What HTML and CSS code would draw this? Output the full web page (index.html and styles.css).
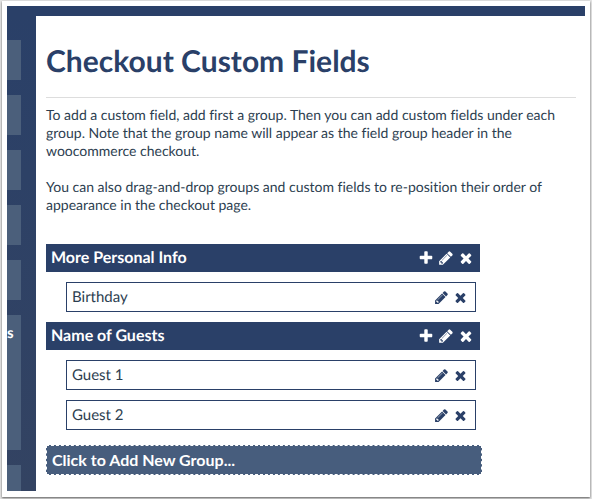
FILE: index.html
```html
<!DOCTYPE html>
<html lang="en">
<head>
    <meta charset="UTF-8">
    <meta name="viewport" content="width=device-width, initial-scale=1.0">
    <title>Checkout Custom Fields</title>
    <link rel="stylesheet" href="styles.css">
</head>
<body>
    <svg class="sprite" aria-hidden="true">
        <symbol id="icon-plus" viewBox="0 0 1792 1792"><path d="M1600 736v192q0 40-28 68t-68 28h-416v416q0 40-28 68t-68 28h-192q-40 0-68-28t-28-68v-416h-416q-40 0-68-28t-28-68v-192q0-40 28-68t68-28h416v-416q0-40 28-68t68-28h192q40 0 68 28t28 68v416h416q40 0 68 28t28 68z"/></symbol>
        <symbol id="icon-pencil" viewBox="0 0 1792 1792"><path d="M491 1536l91-91-235-235-91 91v107h128v128h107zm523-928q0-22-22-22-10 0-17 7l-542 542q-7 7-7 17 0 22 22 22 10 0 17-7l542-542q7-7 7-17zm-54-192l416 416-832 832h-416v-416zm683 96q0 53-37 90l-166 166-416-416 166-165q36-38 90-38 53 0 91 38l235 234q37 39 37 91z"/></symbol>
        <symbol id="icon-times" viewBox="0 0 1792 1792"><path d="M1490 1322q0 40-28 68l-136 136q-28 28-68 28t-68-28l-294-294-294 294q-28 28-68 28t-68-28l-136-136q-28-28-28-68t28-68l294-294-294-294q-28-28-28-68t28-68l136-136q28-28 68-28t68 28l294 294 294-294q28-28 68-28t68 28l136 136q28 28 28 68t-28 68l-294 294 294 294q28 28 28 68z"/></symbol>
    </svg>

    <div class="frame">
        <div class="app">
            <nav class="sidebar">
                <div class="tile"></div>
                <div class="tile"></div>
                <div class="tile"></div>
                <div class="tile"></div>
                <div class="tile"></div>
                <div class="tile tile-tall">s</div>
                <div class="tile tile-last"></div>
            </nav>

            <main class="content">
                <h1>Checkout Custom Fields</h1>

                <p>To add a custom field, add first a group. Then you can add custom fields under each group. Note that the group name will appear as the field group header in the woocommerce checkout.</p>
                <p>You can also drag-and-drop groups and custom fields to re-position their order of appearance in the checkout page.</p>

                <div class="groups">
                    <section class="group">
                        <div class="group-header">
                            <h2>More Personal Info</h2>
                            <button type="button" aria-label="Add field"><svg class="icon"><use href="#icon-plus"/></svg></button>
                            <button type="button" aria-label="Edit group"><svg class="icon"><use href="#icon-pencil"/></svg></button>
                            <button type="button" aria-label="Delete group"><svg class="icon"><use href="#icon-times"/></svg></button>
                        </div>
                        <ul class="fields">
                            <li class="field">
                                <span>Birthday</span>
                                <button type="button" aria-label="Edit field"><svg class="icon"><use href="#icon-pencil"/></svg></button>
                                <button type="button" aria-label="Delete field"><svg class="icon"><use href="#icon-times"/></svg></button>
                            </li>
                        </ul>
                    </section>

                    <section class="group">
                        <div class="group-header">
                            <h2>Name of Guests</h2>
                            <button type="button" aria-label="Add field"><svg class="icon"><use href="#icon-plus"/></svg></button>
                            <button type="button" aria-label="Edit group"><svg class="icon"><use href="#icon-pencil"/></svg></button>
                            <button type="button" aria-label="Delete group"><svg class="icon"><use href="#icon-times"/></svg></button>
                        </div>
                        <ul class="fields">
                            <li class="field">
                                <span>Guest 1</span>
                                <button type="button" aria-label="Edit field"><svg class="icon"><use href="#icon-pencil"/></svg></button>
                                <button type="button" aria-label="Delete field"><svg class="icon"><use href="#icon-times"/></svg></button>
                            </li>
                            <li class="field">
                                <span>Guest 2</span>
                                <button type="button" aria-label="Edit field"><svg class="icon"><use href="#icon-pencil"/></svg></button>
                                <button type="button" aria-label="Delete field"><svg class="icon"><use href="#icon-times"/></svg></button>
                            </li>
                        </ul>
                    </section>
                </div>

                <button type="button" class="add-group">Click to Add New Group...</button>
            </main>
        </div>
    </div>
</body>
</html>
```

FILE: styles.css
```css
* { box-sizing: border-box; }
body {
    margin: 0;
    padding: 1px 2px 2px;
    min-height: 100vh;
    display: flex;
    background: #e4e4e4;
    color: #2c3e50;
    font-family: Lato, "Open Sans", sans-serif;
    font-size: 15px;
    line-height: 18px;
    font-variant-ligatures: none;
    text-rendering: geometricPrecision;
}
h1, h2, p, ul { margin: 0; padding: 0; }
button {
    margin: 0; padding: 0; border: 0;
    background: none; color: inherit;
    font: inherit; cursor: pointer;
}
.sprite { display: none; }

/* White frame around the page */
.frame {
    flex: 1;
    display: flex;
    padding: 5px 5px 6px;
    background: #fff;
    box-shadow: 0 1px 2px rgba(0,0,0,0.6);
}
.app {
    flex: 1;
    display: flex;
    border-top: 10px solid #2a4068;
}

.sidebar {
    flex: none;
    width: 29px;
    padding: 24px 15px 0 0;
    display: flex;
    flex-direction: column;
    gap: 15px;
    background: linear-gradient(#2a4068, #334362);
}
.tile { height: 40px; background: #4b5f7b; color: #fff; font-weight: bold; }
.tile-tall { height: 135px; padding-top: 9px; }
.tile-last { flex: 1; }

.content { flex: 1; padding: 27px 9px 15px 10px; }
h1 {
    margin-bottom: 8px;
    padding-bottom: 18px;
    border-bottom: 1px solid #ddd;
    color: #2a4068;
    font-size: 30px;
    line-height: 36px;
}
p { margin-bottom: 18px; font-size: 14px; }

.groups { max-width: 434px; padding-top: 12px; }
.group-header {
    display: flex;
    align-items: center;
    gap: 4px;
    height: 28px;
    padding: 0 6px 0 5px;
    background: #2a4068;
    color: #fff;
}
h2 { flex: 1; font-size: 16px; line-height: 18px; }
.fields {
    display: flex;
    flex-direction: column;
    gap: 10px;
    padding: 10px 4px 10px 20px;
    list-style: none;
}
.field {
    display: flex;
    align-items: center;
    gap: 4px;
    height: 30px;
    padding: 0 7px 0 5px;
    border: 1px solid #2a4068;
}
.field span { flex: 1; }
.field button { color: #2a4068; }
.icon { display: block; width: 16px; height: 16px; fill: currentColor; }
.field .icon { width: 15px; height: 15px; }

.add-group {
    display: block;
    width: 100%;
    max-width: 436px;
    height: 30px;
    margin-top: 5px;
    padding: 0 5px;
    border: 1px dashed #fff;
    background: #475d7d;
    color: #fff;
    font-size: 16px;
    font-weight: bold;
    text-align: left;
}
```
